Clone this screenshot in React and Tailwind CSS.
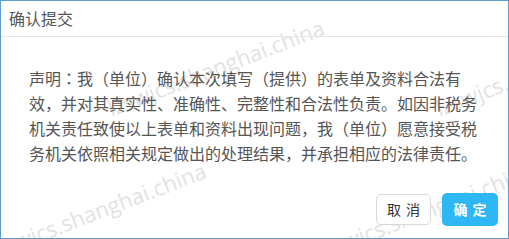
import React from "react";

const cjk = { fontFamily: '"Microsoft YaHei", "Noto Sans CJK SC", "Noto Sans", sans-serif' };
const jp = { fontFamily: '"Noto Sans CJK JP", "Noto Sans CJK SC", sans-serif' };

// end points (right end, text centre line) of each watermark
const marks = [
  { x: 205, y: 168 },
  { x: 533, y: 168 },
  { x: 323, y: 25 },
  { x: 651, y: 25 },
];

export default function App() {
  return (
    <div
      className="relative w-[509px] h-[239px] overflow-hidden bg-white border border-[#5b9bd5] flex flex-col"
      style={cjk}
    >
      {marks.map((m, i) => (
        <span
          key={i}
          className="pointer-events-none absolute whitespace-nowrap text-[22px] leading-[24px] text-[#e2e2e2] origin-[100%_50%] rotate-[-21deg]"
          style={{ right: 508 - m.x, top: m.y - 12, fontFamily: '"Open Sans", "Liberation Sans", sans-serif' }}
        >
          lzswjcs.shanghai.china
        </span>
      ))}
      <div className="relative h-[36px] shrink-0 border-b border-[#e6e6e6] pl-[8px] pt-[5px]">
        <span className="text-[16px] leading-[23px] text-[#555]">确认提交</span>
      </div>
      <div className="relative pl-[28px] pt-[29px] text-[16px] leading-[25px] text-[#555]">
        <div className="whitespace-nowrap">
          声明<span style={jp}>：</span>我（单位）确认本次填写（提供）的表单及资料合法有
        </div>
        <div className="whitespace-nowrap">效，并对其真实性、准确性、完整性和合法性负责。如因非税务</div>
        <div className="whitespace-nowrap">机关责任致使以上表单和资料出现问题，我（单位）愿意接受税</div>
        <div className="whitespace-nowrap">务机关依照相关规定做出的处理结果，并承担相应的法律责任。</div>
      </div>
      <div className="relative mt-auto flex items-center justify-end gap-[11px] pr-[10px] pb-[12px]">
        <button className="w-[55px] h-[31px] rounded-[5px] border border-[#d9d9d9] bg-white flex items-center justify-center gap-[5px] text-[14px] text-[#333]">
          <span>取</span>
          <span>消</span>
        </button>
        <button className="w-[56px] h-[33px] rounded-[5px] bg-[#2db7f5] flex items-center justify-center gap-[5px] text-[14px] font-semibold text-white">
          <span>确</span>
          <span>定</span>
        </button>
      </div>
    </div>
  );
}
